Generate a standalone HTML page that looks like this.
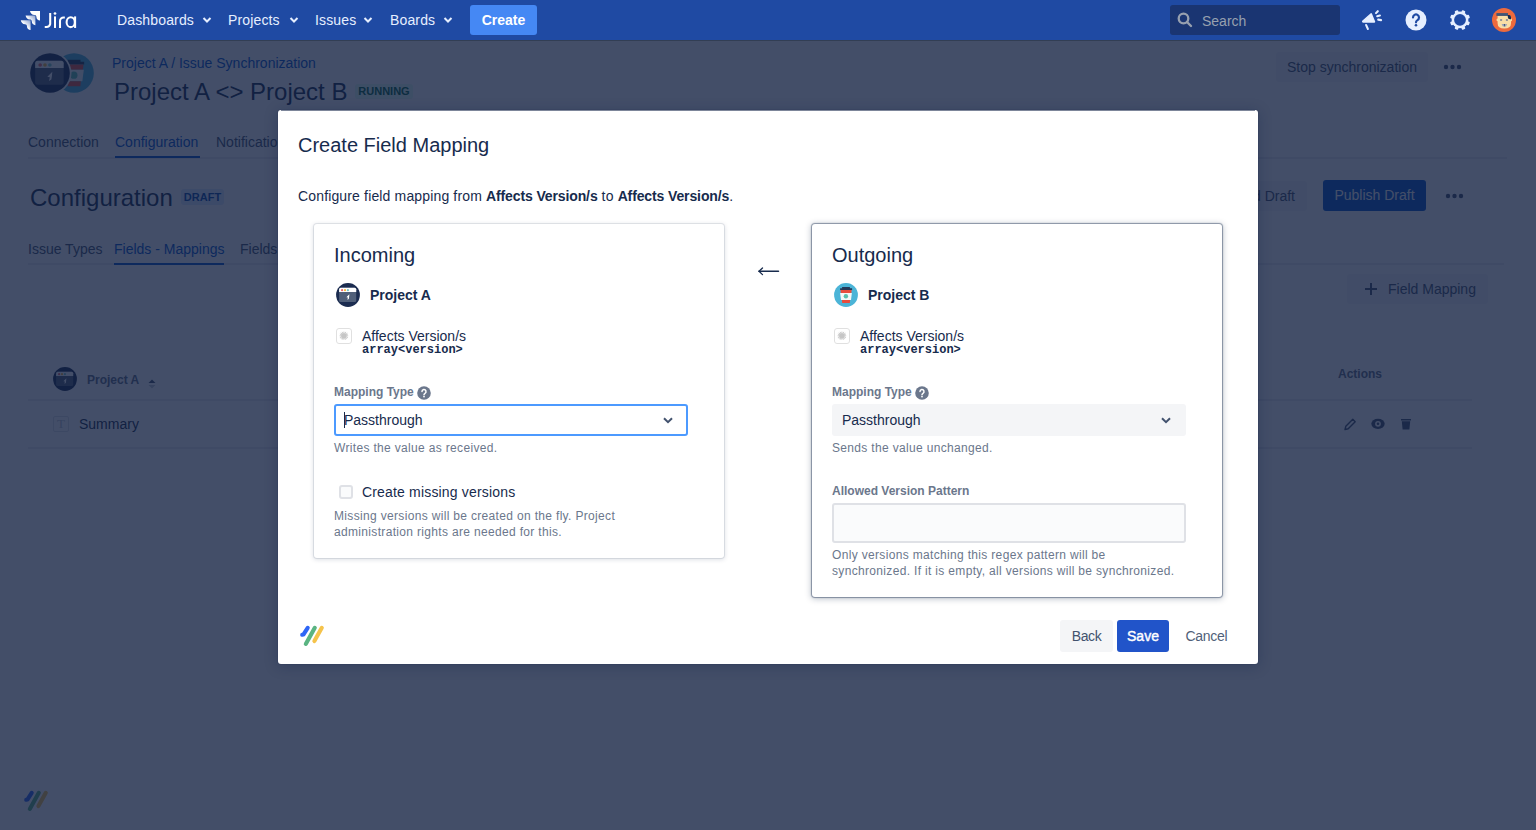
<!DOCTYPE html>
<html><head><meta charset="utf-8">
<style>
*{box-sizing:border-box;margin:0;padding:0}
html,body{width:1536px;height:830px;overflow:hidden}
body{font-family:"Liberation Sans",sans-serif;background:#fff;position:relative;color:#172b4d}
.a{position:absolute;white-space:nowrap}
#nav{position:absolute;left:0;top:0;width:1536px;height:40px;background:#1f4aa3}
.nv{position:absolute;top:13px;font-size:14px;color:#e6efff;line-height:14px;letter-spacing:0.15px}
.t14{font-size:14px;line-height:14px}
.t12{font-size:12px;line-height:12px}
#page{position:absolute;left:0;top:0;width:1536px;height:830px;background:#fff}
#blanket{position:absolute;left:0;top:40px;width:1536px;height:790px;background:rgba(16,31,63,0.79)}
#modal{position:absolute;left:278px;top:110px;width:980px;height:554px;background:#fff;border-radius:3px;box-shadow:0 0 0 1px rgba(9,30,66,0.08),0 2px 14px rgba(9,30,66,0.28)}
.card{position:absolute;background:#fff;border-radius:3px}
.help{color:#6b778c;font-size:12px;line-height:16px;letter-spacing:0.33px}
.lbl{color:#6b778c;font-size:12px;line-height:12px;font-weight:bold}
</style></head><body>
<div id="page">
  <!-- header avatars -->
  <svg class="a" style="left:28px;top:51px" width="70" height="46" viewBox="0 0 70 46">
    <g transform="translate(26,2) scale(1.6667)"><circle cx="12" cy="12" r="11.9" fill="#4bb4d7"/>
    <path d="M8.1,4.1 h7.8 v1.1 h2.2 v1.7 h-12 v-1.7 h2z" fill="#253858"/>
    <path d="M6.5,6.9 h11.2 l-0.4,3.2 h-10.4z" fill="#e84c3d"/>
    <path d="M6.1,10.1 h11.8 l-0.9,6.9 h-10z" fill="#f4f7f7"/>
    <circle cx="11.9" cy="13.3" r="2.2" fill="#5bbfad"/>
    <path d="M7.9,17 h8.2 l-0.3,3 h-7.6z" fill="#e84c3d"/></g>
    <circle cx="22" cy="22" r="21.5" fill="#fff"/>
    <g transform="translate(2,2) scale(1.6667)"><circle cx="12" cy="12" r="11.9" fill="#1b2c50"/>
    <path d="M3.1,6.2 a1.5,1.5 0 0 1 1.5,-1.5 h14.1 a1.5,1.5 0 0 1 1.5,1.5 v11.3 a1.5,1.5 0 0 1 -1.5,1.5 h-14.1 a1.5,1.5 0 0 1 -1.5,-1.5z" fill="#505f79"/>
    <path d="M3.1,6.2 a1.5,1.5 0 0 1 1.5,-1.5 h14.1 a1.5,1.5 0 0 1 1.5,1.5 v2.8 h-17.1z" fill="#fff"/>
    <circle cx="6.1" cy="7.2" r="1.1" fill="#f0676a"/><circle cx="9" cy="7.2" r="1.1" fill="#f5b73b"/><circle cx="11.9" cy="7.2" r="1.1" fill="#79c9c8"/>
    <path d="M13.4,11.2 L10.4,14.3 L11.9,14.5 L11.4,16.8 L12.8,15.9 L13.1,14.2 Z" fill="#fff"/></g>
  </svg>
  <div class="a t14" style="left:112px;top:56px;color:#0052cc">Project A / Issue Synchronization</div>
  <div class="a" style="left:114px;top:80px;font-size:24px;line-height:24px;color:#172b4d">Project A &lt;&gt; Project B</div>
  <div class="a" style="left:355px;top:84px;width:58px;height:15px;background:#e3fcef;border-radius:3px;color:#006644;font-size:11px;font-weight:bold;line-height:15px;text-align:center">RUNNING</div>
  <div class="a" style="left:1276px;top:52px;width:152px;height:30px;background:#f4f5f7;border-radius:3px;color:#42526e;font-size:14px;line-height:30px;text-align:center">Stop synchronization</div>
  <svg class="a" style="left:1443px;top:64px" width="20" height="6"><circle cx="3" cy="3" r="2.2" fill="#42526e"/><circle cx="9.5" cy="3" r="2.2" fill="#42526e"/><circle cx="16" cy="3" r="2.2" fill="#42526e"/></svg>
  <!-- tabs -->
  <div class="a" style="left:28px;top:157px;width:1479px;height:2px;background:#ebecf0"></div>
  <div class="a t14" style="left:28px;top:135.3px;color:#42526e">Connection</div>
  <div class="a t14" style="left:115px;top:135.3px;color:#0052cc">Configuration</div>
  <div class="a" style="left:115px;top:156px;width:85px;height:2px;background:#0052cc"></div>
  <div class="a t14" style="left:216px;top:135.3px;color:#42526e">Notifications</div>
  <div class="a" style="left:30px;top:186px;font-size:24px;line-height:24px;color:#172b4d">Configuration</div>
  <div class="a" style="left:181px;top:189px;width:43px;height:16px;background:#deebff;border-radius:3px;color:#0747a6;font-size:11px;font-weight:bold;line-height:16px;text-align:center">DRAFT</div>
  <div class="a" style="left:1200px;top:181px;width:107px;height:30px;background:#f4f5f7;border-radius:3px;color:#42526e;font-size:14px;line-height:30px;text-align:right;padding-right:12px">Discard Draft</div>
  <div class="a" style="left:1323px;top:180px;width:103px;height:31px;background:#0052cc;border-radius:3px;color:#fff;font-size:14px;line-height:31px;text-align:center">Publish Draft</div>
  <svg class="a" style="left:1445px;top:193px" width="20" height="6"><circle cx="3" cy="3" r="2.2" fill="#42526e"/><circle cx="9.5" cy="3" r="2.2" fill="#42526e"/><circle cx="16" cy="3" r="2.2" fill="#42526e"/></svg>
  <!-- subtabs -->
  <div class="a" style="left:28px;top:263px;width:1476px;height:2px;background:#ebecf0"></div>
  <div class="a t14" style="left:28px;top:242px;color:#42526e">Issue Types</div>
  <div class="a t14" style="left:114px;top:242px;color:#0052cc">Fields - Mappings</div>
  <div class="a" style="left:114px;top:263px;width:110px;height:2px;background:#0052cc"></div>
  <div class="a t14" style="left:240px;top:242px;color:#42526e">Fields - Defaults</div>
  <div class="a" style="left:1347px;top:274px;width:141px;height:30px;background:#f4f5f7;border-radius:3px"></div>
  <div class="a" style="left:1365px;top:288px;width:12px;height:2px;background:#42526e"></div>
  <div class="a" style="left:1370px;top:283px;width:2px;height:12px;background:#42526e"></div>
  <div class="a t14" style="left:1388px;top:282px;color:#42526e">Field Mapping</div>
  <!-- table -->
  <svg class="a" style="left:53px;top:367px" width="24" height="24" viewBox="0 0 24 24">
    <circle cx="12" cy="12" r="11.9" fill="#1b2c50"/>
    <path d="M3.1,6.2 a1.5,1.5 0 0 1 1.5,-1.5 h14.1 a1.5,1.5 0 0 1 1.5,1.5 v11.3 a1.5,1.5 0 0 1 -1.5,1.5 h-14.1 a1.5,1.5 0 0 1 -1.5,-1.5z" fill="#505f79"/>
    <path d="M3.1,6.2 a1.5,1.5 0 0 1 1.5,-1.5 h14.1 a1.5,1.5 0 0 1 1.5,1.5 v2.8 h-17.1z" fill="#fff"/>
    <circle cx="6.1" cy="7.2" r="1.1" fill="#f0676a"/><circle cx="9" cy="7.2" r="1.1" fill="#f5b73b"/><circle cx="11.9" cy="7.2" r="1.1" fill="#79c9c8"/>
    <path d="M13.4,11.2 L10.4,14.3 L11.9,14.5 L11.4,16.8 L12.8,15.9 L13.1,14.2 Z" fill="#fff"/>
  </svg>
  <div class="a t12" style="left:87px;top:374px;font-weight:bold;color:#5e6c84">Project A</div>
  <svg class="a" style="left:148px;top:379px" width="8" height="10"><path d="M0.5 4 L4 0.5 L7.5 4z" fill="#42526e"/><path d="M0.5 6 L4 9.5 L7.5 6z" fill="#c1c7d0"/></svg>
  <div class="a t12" style="left:1338px;top:368px;font-weight:bold;color:#5e6c84">Actions</div>
  <div class="a" style="left:28px;top:399px;width:1444px;height:2px;background:#ebecf0"></div>
  <div class="a" style="left:53px;top:416px;width:16px;height:16px;border:1px solid #dfe1e6;border-radius:2px;color:#c1c7d0;font-family:'Liberation Serif',serif;font-size:13px;line-height:14px;text-align:center">T</div>
  <div class="a t14" style="left:79px;top:417px;color:#172b4d">Summary</div>
  <svg class="a" style="left:1343px;top:417px" width="72" height="14" viewBox="0 0 72 14">
    <path d="M2 12.5 l0.8 -3.2 l7 -7 l2.4 2.4 l-7 7z" fill="none" stroke="#42526e" stroke-width="1.4" stroke-linejoin="round"/>
    <ellipse cx="35" cy="6.8" rx="6.7" ry="5.1" fill="#42526e"/><circle cx="35" cy="6.8" r="2.9" fill="#fff"/><circle cx="35" cy="6.8" r="1.3" fill="#42526e"/>
    <path d="M58 2 h10 v1.6 h-10z M58.8 4.2 h8.4 l-0.8 8.3 h-6.8z" fill="#42526e"/>
  </svg>
  <div class="a" style="left:28px;top:447px;width:1444px;height:2px;background:#ebecf0"></div>
  <!-- k15t logo bottom -->
  <svg class="a" style="left:21.6px;top:787.9px" width="30" height="26" viewBox="0 0 30 26">
    <path d="M9.7,4.8 L5.4,11.6 L4.2,11.8" fill="none" stroke="#2e66f6" stroke-width="4.1" stroke-linecap="round" stroke-linejoin="round"/>
    <path d="M16.8,4.8 L7.8,20.9" stroke="#5ab482" stroke-width="4.1" stroke-linecap="round"/>
    <path d="M23.8,4.8 L16.4,18.1" stroke="#f5c34b" stroke-width="4.1" stroke-linecap="round"/>
  </svg>
</div>

<div id="nav">
  <svg class="a" style="left:20px;top:10px" width="58" height="22" viewBox="0 0 58 22">
    <defs><linearGradient id="jg" x1="1" y1="0" x2="0" y2="1"><stop offset="0" stop-color="#fff" stop-opacity="0.45"/><stop offset="0.55" stop-color="#fff"/></linearGradient></defs>
    <path d="M10,1 H20 V10.6 C18,10.6 16.4,9 16.4,7 C16.4,5.5 15.5,5 14.5,5 C12,5 10.3,3 10,1 Z" fill="#fff"/>
    <path d="M5.6,5.6 H15.4 V15.2 C13.4,15.2 11.8,13.6 11.8,11.6 C11.8,10.1 10.9,9.6 9.9,9.6 C7.4,9.6 5.9,7.6 5.6,5.6 Z" fill="url(#jg)"/>
    <path d="M0.8,10.2 H10.6 V20 C8.6,20 7,18.4 7,16.4 C7,14.9 6.1,14.2 5.1,14.2 C2.6,14.2 1.1,12.2 0.8,10.2 Z" fill="url(#jg)"/>
    </svg>
  <svg class="a" style="left:0;top:0" width="80" height="40" viewBox="0 0 80 40"><g fill="none" stroke="#fff" stroke-width="2.05">
    <path d="M50.2,13.06 V24 A3.95,3.95 0 0 1 46.25,26.95 H44.75"/>
    <path d="M55,16.4 V27.95"/><path d="M60,27.95 V21 A3.6,3.6 0 0 1 63.6,17.4 H64.85"/>
    <ellipse cx="70.7" cy="22.15" rx="4.1" ry="4.95"/><path d="M75.1,16.4 V27.95"/></g>
    <circle cx="55" cy="13.5" r="1.35" fill="#fff"/>
  </svg>
  
  <div class="nv" style="left:117px">Dashboards</div>
  <div class="nv" style="left:228px">Projects</div>
  <div class="nv" style="left:315px">Issues</div>
  <div class="nv" style="left:390px">Boards</div>
  <svg class="a" style="left:202px;top:16px" width="10" height="8"><path d="M1.5 2 L5 5.5 L8.5 2" fill="none" stroke="#e6efff" stroke-width="2"/></svg>
  <svg class="a" style="left:289px;top:16px" width="10" height="8"><path d="M1.5 2 L5 5.5 L8.5 2" fill="none" stroke="#e6efff" stroke-width="2"/></svg>
  <svg class="a" style="left:363px;top:16px" width="10" height="8"><path d="M1.5 2 L5 5.5 L8.5 2" fill="none" stroke="#e6efff" stroke-width="2"/></svg>
  <svg class="a" style="left:443px;top:16px" width="10" height="8"><path d="M1.5 2 L5 5.5 L8.5 2" fill="none" stroke="#e6efff" stroke-width="2"/></svg>
  <div class="a" style="left:470px;top:5px;width:67px;height:30px;background:#4588f4;border-radius:3px;color:#fff;font-weight:bold;font-size:14px;line-height:30px;text-align:center">Create</div>
  <div class="a" style="left:1170px;top:5px;width:170px;height:30px;background:#1a3572;border-radius:3px"></div>
  <svg class="a" style="left:1176px;top:11px" width="18" height="18" viewBox="0 0 18 18"><circle cx="7.5" cy="7.5" r="4.8" fill="none" stroke="#97a0af" stroke-width="2.3"/><path d="M11 11 L15 15" stroke="#97a0af" stroke-width="2.4" stroke-linecap="round"/></svg>
  <div class="a t14" style="left:1202px;top:14px;color:#97a0af">Search</div>
  <svg class="a" style="left:1360px;top:8px" width="24" height="24" viewBox="0 0 24 24">
    <path d="M2.7,13.3 L11.2,5.9 L14.5,13.9 L3,13.9 Z" fill="#e6efff" stroke="#e6efff" stroke-width="1.5" stroke-linejoin="round"/>
    <path d="M6.1,17 L7.9,21" stroke="#e6efff" stroke-width="2" stroke-linecap="round"/>
    <path d="M16,5.1 L17.8,3.2 M17.2,8.2 L19.9,7.5 M18.2,11.6 L21.1,12.1" stroke="#e6efff" stroke-width="2.1" stroke-linecap="round"/>
  </svg>
  <svg class="a" style="left:1404px;top:8px" width="24" height="24" viewBox="0 0 24 24">
    <circle cx="12" cy="12" r="10.5" fill="#e6efff"/>
    <path d="M9 9.5 a3 3 0 1 1 4.5 2.6 c-1 0.6 -1.5 1 -1.5 2.2" fill="none" stroke="#1f4aa3" stroke-width="2.2" stroke-linecap="round"/>
    <circle cx="12" cy="17.3" r="1.3" fill="#1f4aa3"/>
  </svg>
  <svg class="a" style="left:1448px;top:8px" width="24" height="24" viewBox="0 0 24 24">
    <g fill="#e6efff"><circle cx="12" cy="11.9" r="8.4"/><rect x="10.2" y="1.9" width="3.6" height="4.4" rx="0.9" transform="rotate(22.5 12 12)"/><rect x="10.2" y="1.9" width="3.6" height="4.4" rx="0.9" transform="rotate(67.5 12 12)"/><rect x="10.2" y="1.9" width="3.6" height="4.4" rx="0.9" transform="rotate(112.5 12 12)"/><rect x="10.2" y="1.9" width="3.6" height="4.4" rx="0.9" transform="rotate(157.5 12 12)"/><rect x="10.2" y="1.9" width="3.6" height="4.4" rx="0.9" transform="rotate(202.5 12 12)"/><rect x="10.2" y="1.9" width="3.6" height="4.4" rx="0.9" transform="rotate(247.5 12 12)"/><rect x="10.2" y="1.9" width="3.6" height="4.4" rx="0.9" transform="rotate(292.5 12 12)"/><rect x="10.2" y="1.9" width="3.6" height="4.4" rx="0.9" transform="rotate(337.5 12 12)"/></g>
    <circle cx="12" cy="11.85" r="5.9" fill="#1f4aa3"/>
  </svg>
  <svg class="a" style="left:1492px;top:8px" width="24" height="24" viewBox="0 0 24 24">
    <circle cx="12" cy="12" r="12" fill="#ec6a3d"/>
    <path d="M5.6,7.8 h13.4 v7.5 q0,5.3 -6.7,5.3 q-6.7,0 -6.7,-5.3z" fill="#f9dfa6"/>
    <rect x="4.6" y="10.6" width="1.6" height="2.6" rx="0.8" fill="#f9dfa6"/><rect x="18.4" y="10.6" width="1.6" height="2.6" rx="0.8" fill="#f9dfa6"/>
    <rect x="4.4" y="5.1" width="11.6" height="2.8" fill="#3d5677"/>
    <path d="M15.8,7.1 h1.4 a1.8,1.8 0 0 1 1.8,1.8 v2.3 h-1 q-2.2,0 -2.2,-2.2z" fill="#172b4d"/>
    <rect x="8.1" y="11.2" width="2" height="1.6" fill="#7b8294"/><rect x="13.9" y="11.2" width="2" height="1.6" fill="#7b8294"/>
    <path d="M9.6,15.9 h5.6 l-1.2,2.7 h-3.2z" fill="#a0a8b8"/><path d="M11.8,16 h1.2 l-0.3,2.6 h-0.6z" fill="#42526e"/>
  </svg>
</div>

<div id="blanket"></div>
<div class="a" style="left:0;top:40px;width:1536px;height:1px;background:#323e54"></div>

<div id="modal">
  <div class="a" style="left:3px;top:0;width:974px;height:1px;background:#7d869a"></div>
  <div class="a" style="left:20px;top:25px;font-size:20px;line-height:20px;color:#172b4d">Create Field Mapping</div>
  <div class="a t14" style="left:20px;top:78.5px;color:#172b4d;letter-spacing:0.15px">Configure field mapping from <b style="letter-spacing:-0.12px">Affects Version/s</b> to <b style="letter-spacing:-0.12px">Affects Version/s</b>.</div>
  <!-- incoming card -->
  <div class="card" id="cin" style="left:36px;top:114px;width:410px;height:334px;box-shadow:0 0 0 1px rgba(9,30,66,0.09),0 1px 4px 1px rgba(9,30,66,0.13)"></div>
  <div class="a" style="left:56px;top:135px;font-size:20px;line-height:20px;color:#172b4d">Incoming</div>
  <svg class="a" style="left:58px;top:173px" width="24" height="24" viewBox="0 0 24 24">
    <circle cx="12" cy="12" r="11.9" fill="#1b2c50"/>
    <path d="M3.1,6.2 a1.5,1.5 0 0 1 1.5,-1.5 h14.1 a1.5,1.5 0 0 1 1.5,1.5 v11.3 a1.5,1.5 0 0 1 -1.5,1.5 h-14.1 a1.5,1.5 0 0 1 -1.5,-1.5z" fill="#505f79"/>
    <path d="M3.1,6.2 a1.5,1.5 0 0 1 1.5,-1.5 h14.1 a1.5,1.5 0 0 1 1.5,1.5 v2.8 h-17.1z" fill="#fff"/>
    <circle cx="6.1" cy="7.2" r="1.1" fill="#f0676a"/><circle cx="9" cy="7.2" r="1.1" fill="#f5b73b"/><circle cx="11.9" cy="7.2" r="1.1" fill="#79c9c8"/>
    <path d="M13.4,11.2 L10.4,14.3 L11.9,14.5 L11.4,16.8 L12.8,15.9 L13.1,14.2 Z" fill="#fff"/>
  </svg>
  <div class="a t14" style="left:92px;top:178px;font-weight:bold;color:#172b4d">Project A</div>
  <svg class="a" style="left:58px;top:218px" width="16" height="16" viewBox="0 0 16 16">
    <rect x="0.5" y="0.5" width="15" height="15" rx="2.5" fill="#fff" stroke="#e0e0e0"/>
    <g stroke="#cacaca" stroke-width="1"><path d="M7.9 3.6 V11.8 M3.6 7.8 H12.2 M4.9 4.8 L10.9 10.8 M10.9 4.8 L4.9 10.8 M6.1 3.9 L9.7 11.7 M9.7 3.9 L6.1 11.7 M3.9 6 L11.9 9.6 M3.9 9.6 L11.9 6"/></g>
    <circle cx="7.9" cy="7.8" r="2.6" fill="#c6c6c6"/>
  </svg>
  <div class="a t14" style="left:84px;top:219px;color:#172b4d">Affects Version/s</div>
  <div class="a" style="left:84px;top:233.5px;font-family:'Liberation Mono',monospace;font-weight:bold;font-size:12px;line-height:12px;color:#172b4d">array&lt;version&gt;</div>
  <div class="a lbl" style="left:56px;top:275.7px">Mapping Type</div>
  <svg class="a" style="left:139px;top:276px" width="14" height="14" viewBox="0 0 14 14"><circle cx="7" cy="7" r="6.8" fill="#6b778c"/><path d="M5 5.6 a2 2 0 1 1 3 1.7 c-0.7 0.4 -1 0.7 -1 1.5" fill="none" stroke="#fff" stroke-width="1.5" stroke-linecap="round"/><circle cx="7" cy="10.6" r="0.9" fill="#fff"/></svg>
  <div class="a" style="left:56px;top:294px;width:354px;height:32px;border:2px solid #4c9aff;border-radius:3px;background:#fff"></div>
  <div class="a" style="left:66px;top:302px;width:1px;height:16px;background:#172b4d"></div>
  <div class="a t14" style="left:66px;top:303px;color:#172b4d">Passthrough</div>
  <svg class="a" style="left:385px;top:307px" width="10" height="7"><path d="M1 1.2 L5 5.2 L9 1.2" fill="none" stroke="#42526e" stroke-width="2"/></svg>
  <div class="a help" style="left:56px;top:329.6px">Writes the value as received.</div>
  <div class="a" style="left:61px;top:375px;width:14px;height:14px;border:2px solid #dfe1e6;border-radius:3px;background:#fafbfc"></div>
  <div class="a t14" style="left:84px;top:375px;color:#172b4d;letter-spacing:0.17px">Create missing versions</div>
  <div class="a help" style="left:56px;top:398.4px">Missing versions will be created on the fly. Project<br>administration rights are needed for this.</div>
  <!-- arrow -->
  <svg class="a" style="left:480px;top:156px" width="24" height="10" viewBox="0 0 24 10"><path d="M1 5.3 H20.5" stroke="#172b4d" stroke-width="1.5" stroke-linecap="round"/><path d="M4.5 2 L1 5.3 L4.5 8.6" fill="none" stroke="#172b4d" stroke-width="1.3" stroke-linecap="round"/></svg>
  <!-- outgoing card -->
  <div class="card" id="cout" style="left:534px;top:114px;width:410px;height:373px;box-shadow:0 0 1px 1px rgba(9,30,66,0.42),0 1px 6px 1px rgba(9,30,66,0.26)"></div>
  <div class="a" style="left:554px;top:135px;font-size:20px;line-height:20px;color:#172b4d">Outgoing</div>
  <svg class="a" style="left:556px;top:173px" width="24" height="24" viewBox="0 0 24 24">
    <circle cx="12" cy="12" r="11.9" fill="#4bb4d7"/>
    <path d="M8.1,4.1 h7.8 v1.1 h2.2 v1.7 h-12 v-1.7 h2z" fill="#253858"/>
    <path d="M6.5,6.9 h11.2 l-0.4,3.2 h-10.4z" fill="#e84c3d"/>
    <path d="M6.1,10.1 h11.8 l-0.9,6.9 h-10z" fill="#f4f7f7"/>
    <circle cx="11.9" cy="13.3" r="2.2" fill="#5bbfad"/>
    <path d="M7.9,17 h8.2 l-0.3,3 h-7.6z" fill="#e84c3d"/>
  </svg>
  <div class="a t14" style="left:590px;top:178px;font-weight:bold;color:#172b4d">Project B</div>
  <svg class="a" style="left:556px;top:218px" width="16" height="16" viewBox="0 0 16 16">
    <rect x="0.5" y="0.5" width="15" height="15" rx="2.5" fill="#fff" stroke="#e0e0e0"/>
    <g stroke="#cacaca" stroke-width="1"><path d="M7.9 3.6 V11.8 M3.6 7.8 H12.2 M4.9 4.8 L10.9 10.8 M10.9 4.8 L4.9 10.8 M6.1 3.9 L9.7 11.7 M9.7 3.9 L6.1 11.7 M3.9 6 L11.9 9.6 M3.9 9.6 L11.9 6"/></g>
    <circle cx="7.9" cy="7.8" r="2.6" fill="#c6c6c6"/>
  </svg>
  <div class="a t14" style="left:582px;top:219px;color:#172b4d">Affects Version/s</div>
  <div class="a" style="left:582px;top:233.5px;font-family:'Liberation Mono',monospace;font-weight:bold;font-size:12px;line-height:12px;color:#172b4d">array&lt;version&gt;</div>
  <div class="a lbl" style="left:554px;top:275.7px">Mapping Type</div>
  <svg class="a" style="left:637px;top:276px" width="14" height="14" viewBox="0 0 14 14"><circle cx="7" cy="7" r="6.8" fill="#6b778c"/><path d="M5 5.6 a2 2 0 1 1 3 1.7 c-0.7 0.4 -1 0.7 -1 1.5" fill="none" stroke="#fff" stroke-width="1.5" stroke-linecap="round"/><circle cx="7" cy="10.6" r="0.9" fill="#fff"/></svg>
  <div class="a" style="left:554px;top:294px;width:354px;height:32px;border-radius:3px;background:#f4f5f7"></div>
  <div class="a t14" style="left:564px;top:303px;color:#172b4d">Passthrough</div>
  <svg class="a" style="left:883px;top:307px" width="10" height="7"><path d="M1 1.2 L5 5.2 L9 1.2" fill="none" stroke="#42526e" stroke-width="2"/></svg>
  <div class="a help" style="left:554px;top:329.6px">Sends the value unchanged.</div>
  <div class="a lbl" style="left:554px;top:374.6px">Allowed Version Pattern</div>
  <div class="a" style="left:554px;top:393px;width:354px;height:39.5px;border:2px solid #dfe1e6;border-radius:3px;background:#fafbfc"></div>
  <div class="a help" style="left:554px;top:436.7px">Only versions matching this regex pattern will be<br>synchronized. If it is empty, all versions will be synchronized.</div>
  <!-- footer -->
  <svg class="a" style="left:20px;top:513px" width="30" height="26" viewBox="0 0 30 26">
    <path d="M9.7,4.8 L5.4,11.6 L4.2,11.8" fill="none" stroke="#2e66f6" stroke-width="4.1" stroke-linecap="round" stroke-linejoin="round"/>
    <path d="M16.8,4.8 L7.8,20.9" stroke="#5ab482" stroke-width="4.1" stroke-linecap="round"/>
    <path d="M23.8,4.8 L16.4,18.1" stroke="#f5c34b" stroke-width="4.1" stroke-linecap="round"/>
  </svg>
  <div class="a" style="left:782px;top:510px;width:53px;height:32px;background:#f4f5f7;border-radius:3px;color:#42526e;font-size:14px;line-height:32px;text-align:center;letter-spacing:-0.4px">Back</div>
  <div class="a" style="left:839px;top:510px;width:52px;height:32px;background:#2154c9;border-radius:3px;color:#fff;font-size:14px;line-height:32px;text-align:center;-webkit-text-stroke:0.4px #fff">Save</div>
  <div class="a" style="left:907.5px;top:510px;height:32px;color:#505f79;font-size:14px;line-height:32px;letter-spacing:-0.3px">Cancel</div>
</div>
</body></html>
